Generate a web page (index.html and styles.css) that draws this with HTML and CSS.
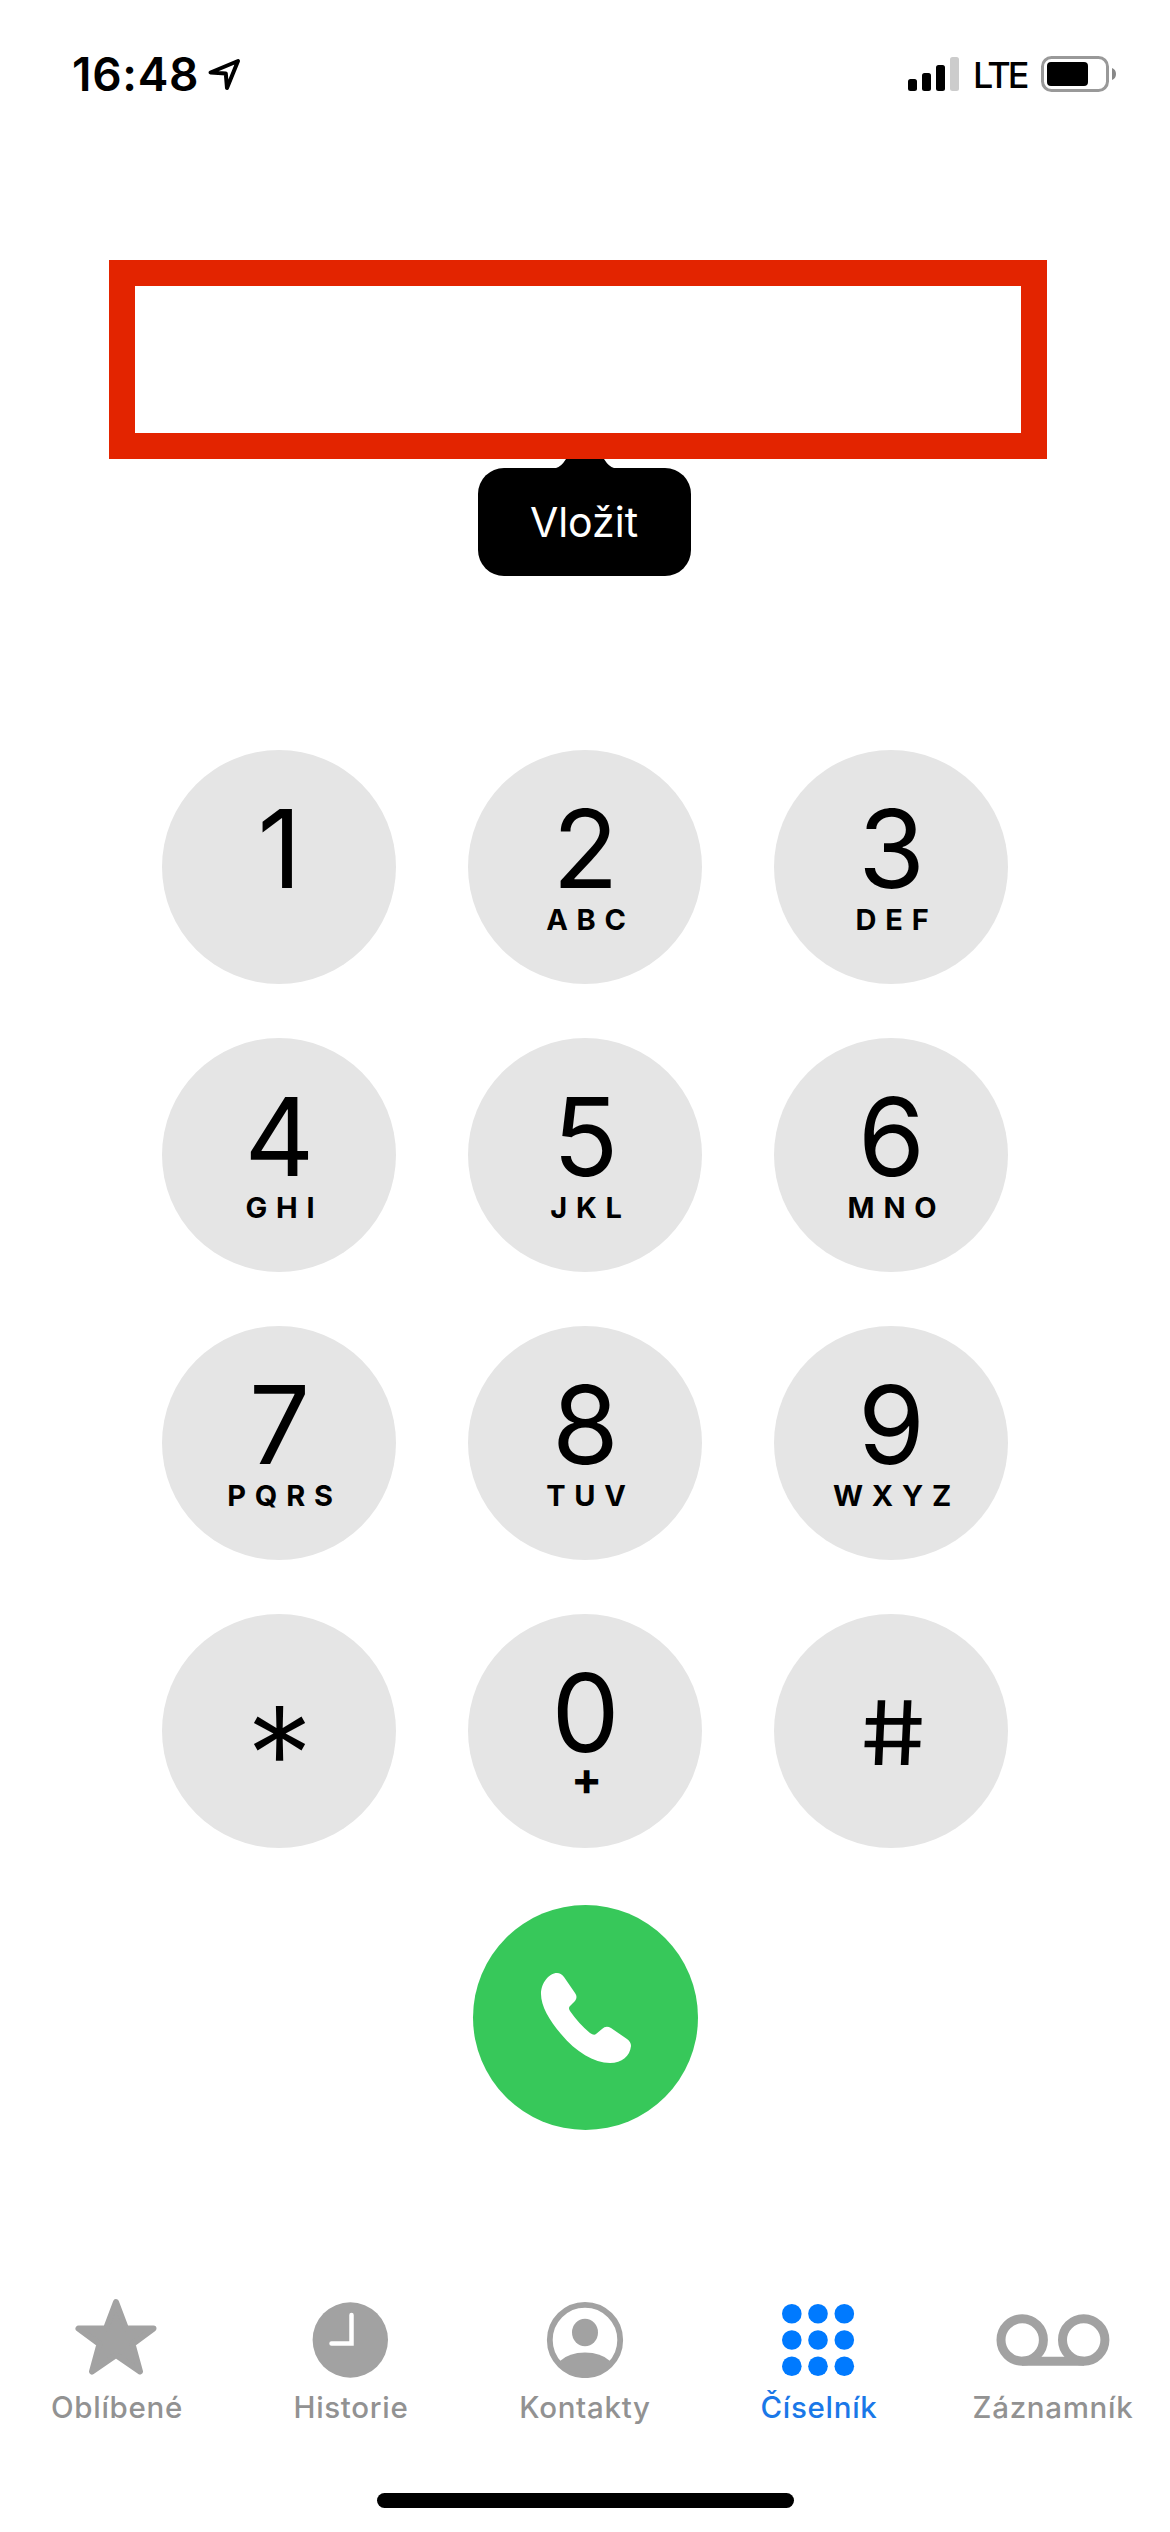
FILE: index.html
```html
<!DOCTYPE html>
<html lang="cs"><head><meta charset="utf-8">
<title>Číselník</title>
<link rel="stylesheet" href="styles.css">
</head><body>

<header class="status">
	<span class="time">16:48</span>
	<svg class="location" width="34" height="34" viewBox="0 0 34 34"><path d="M3.500 15.500 31 4 20 31 18.800 16.500Z"/></svg>
	<svg class="signal" width="52" height="36" viewBox="0 0 52 36">
		<rect x="0" y="23" width="9" height="12" rx="2.5"/>
		<rect x="14" y="17" width="9" height="18" rx="2.5"/>
		<rect x="28" y="9" width="9" height="26" rx="2.5"/>
		<rect class="off" x="42" y="1" width="9" height="34" rx="2.5"/>
	</svg>
	<span class="network">LTE</span>
	<svg class="battery" width="76" height="36" viewBox="0 0 76 36">
		<rect class="case" x="1.5" y="1.5" width="65" height="33" rx="9"/>
		<rect x="6" y="6" width="41" height="24" rx="4"/>
		<path class="nub" d="M71 12q4 1.500 4 6t-4 6z"/>
	</svg>
</header>

<main>
	<div class="number">
		<div class="paste">
			<svg class="arrow" width="58" height="9" viewBox="0 0 58 9"><path d="M0 9Q5 8 10 0H48Q53 8 58 9Z"/></svg>
			Vložit
		</div>
	</div>

	<div class="keypad">
		<div class="key"><b>1</b></div>
		<div class="key"><b>2</b><i>ABC</i></div>
		<div class="key"><b>3</b><i>DEF</i></div>
		<div class="key"><b>4</b><i>GHI</i></div>
		<div class="key"><b>5</b><i>JKL</i></div>
		<div class="key"><b>6</b><i>MNO</i></div>
		<div class="key"><b>7</b><i>PQRS</i></div>
		<div class="key"><b>8</b><i>TUV</i></div>
		<div class="key"><b>9</b><i>WXYZ</i></div>
		<div class="key star"><b>*</b></div>
		<div class="key zero"><b>0</b><i>+</i></div>
		<div class="key hash"><b>#</b></div>
	</div>

	<div class="call">
		<svg width="225" height="225" viewBox="0 0 225 225"><path d="M68 89C68 78 76 68 84 68Q88 68 91 72L102 88Q105 92 102 96L97 101Q95 103 97 106Q106 119 117 128Q121 131 123 129L129 124Q133 120 138 123L154 134Q158 137 158 141C157 151 149 158 137 158C121 158 103 147 88 129C76 115 68 101 68 89Z"/></svg>
	</div>
</main>

<nav class="tabs">
	<div class="tab">
		<svg width="84" height="80" viewBox="0 0 84 80"><path stroke-width="6" stroke-linejoin="round" d="M41 4 51 30.500H78.500L57.500 46 65 73.500 41 57 17 73.500 24.500 46 3.500 30.500H31Z"/></svg>
		Oblíbené
	</div>
	<div class="tab">
		<svg width="84" height="80" viewBox="0 0 84 80"><circle cx="41.300" cy="42" r="37.700"/><path class="hands" d="M42.500 17V45.500H22.500"/></svg>
		Historie
	</div>
	<div class="tab">
		<svg width="84" height="80" viewBox="0 0 84 80"><circle class="line" cx="42" cy="42" r="35.200" stroke-width="5.800"/><ellipse cx="42" cy="34.500" rx="13" ry="13.700"/><path d="M17 63Q26 54.500 42 54.500T67 63Q57 77 42 77T17 63Z"/></svg>
		Kontakty
	</div>
	<div class="tab active">
		<svg width="84" height="80" viewBox="0 0 84 80">
			<circle cx="14.800" cy="15.700" r="9.800"/><circle cx="41" cy="15.700" r="9.800"/><circle cx="67.300" cy="15.700" r="9.800"/>
			<circle cx="14.800" cy="42" r="9.800"/><circle cx="41" cy="42" r="9.800"/><circle cx="67.300" cy="42" r="9.800"/>
			<circle cx="14.800" cy="68.200" r="9.800"/><circle cx="41" cy="68.200" r="9.800"/><circle cx="67.300" cy="68.200" r="9.800"/>
		</svg>
		Číselník
	</div>
	<div class="tab">
		<svg width="114" height="80" viewBox="0 0 114 80"><g class="line" stroke-width="9"><circle cx="26.200" cy="42" r="21.200"/><circle cx="87.700" cy="42" r="21.200"/><path d="M26 63.200H88"/></g></svg>
		Záznamník
	</div>
</nav>
<div class="home"></div>

</body></html>
```
FILE: styles.css
```css
body {
	margin: 0;
	width: 1170px;
	height: 2532px;
	display: flex;
	flex-direction: column;
	background: #fff;
	color: #000;
	font-family: Inter, "Liberation Sans", sans-serif;
	overflow: hidden;
}
svg {
	display: block;
	flex: none;
}
.status {
	display: flex;
	align-items: center;
	height: 148px;
	padding: 0 53px 0 72px;
	box-sizing: border-box;
}
.time {
	width: 135px;
	font-size: 46px;
	font-weight: 600;
	letter-spacing: .7px;
}
.location path {
	fill: none;
	stroke: #000;
	stroke-width: 4;
	stroke-linejoin: round;
}
.signal {
	margin-left: auto;
}
.signal .off {
	fill: #ccc;
}
.network {
	margin: 2px 15px 0 13px;
	width: 53px;
	font-size: 36px;
	line-height: 40px;
	font-weight: 500;
	letter-spacing: -2.8px;
}
.battery .case {
	fill: none;
	stroke: #999;
	stroke-width: 3;
}
.battery .nub {
	fill: #888;
}
main {
	display: flex;
	flex-direction: column;
	align-items: center;
	padding-top: 112px;
}
.number {
	position: relative;
	box-sizing: border-box;
	width: 938px;
	height: 199px;
	margin-right: 15px;
	border: 26px solid #e32400;
}
/* callout hangs below the number field */
.paste {
	position: absolute;
	top: 182px;
	left: 343px;
	width: 213px;
	height: 108px;
	border-radius: 26px;
	background: #000;
	color: #fff;
	font-size: 41px;
	line-height: 109px;
	text-align: center;
}
.paste .arrow {
	position: absolute;
	top: -9px;
	left: 78px;
}
.keypad {
	display: grid;
	grid-template-columns: repeat(3, 234px);
	grid-auto-rows: 234px;
	gap: 54px 72px;
	margin-top: 291px;
}
.key {
	border-radius: 50%;
	background: #e5e5e5;
	text-align: center;
}
.key b {
	display: block;
	padding-top: 44px;
	font-size: 108px;
	line-height: 110px;
	font-weight: 400;
	text-indent: 1px;
}
.key i {
	display: block;
	margin-top: 1px;
	font-size: 29px;
	line-height: 30px;
	font-style: normal;
	font-weight: 700;
	letter-spacing: 8.8px;
	text-indent: 11px;
}
.key.zero i {
	margin-top: -5px;
	font-size: 46px;
	letter-spacing: 0;
	text-indent: 3px;
}
.key.star b {
	padding-top: 85px;
	font-size: 134px;
	font-weight: 300;
}
.key.hash b {
	padding-top: 64px;
	font-size: 89px;
	text-indent: -4px;
	transform: scaleX(1.15) skewX(7deg);
}
.call {
	margin-top: 57px;
	width: 225px;
	height: 225px;
	border-radius: 50%;
	background: #37c85a;
}
.call svg {
	fill: #fff;
}
.tabs {
	display: flex;
	margin-top: 168px;
}
.tab {
	display: flex;
	flex-direction: column;
	align-items: center;
	width: 234px;
	color: #929292;
	font-size: 29.5px;
	line-height: 36px;
	font-weight: 500;
	letter-spacing: .7px;
}
.tab svg {
	margin-bottom: 11px;
	fill: #a2a2a2;
	stroke: #a2a2a2;
	stroke-width: 0;
}
.tab .line {
	fill: none;
}
.tab .hands {
	fill: none;
	stroke: #fff;
	stroke-width: 4.5;
	stroke-linecap: round;
}
.tab.active {
	color: #1a78e8;
}
.tab.active svg {
	fill: #007aff;
}
.home {
	width: 417px;
	height: 15px;
	margin: auto auto 24px;
	border-radius: 8px;
	background: #000;
}
```
